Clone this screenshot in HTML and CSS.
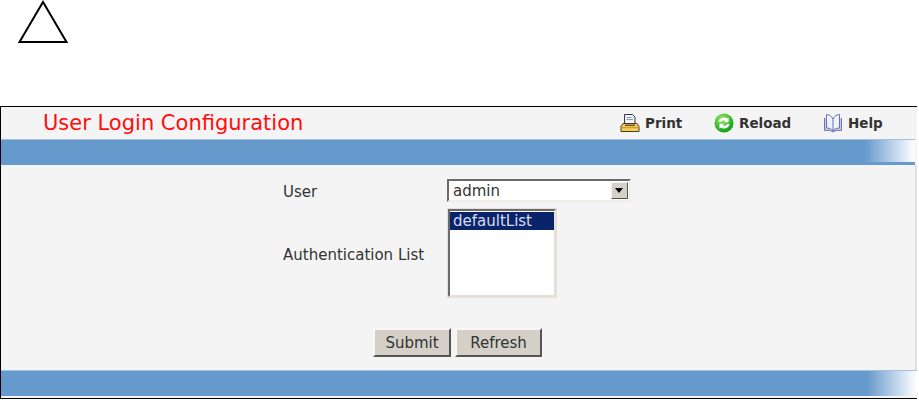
FILE: index.html
```html
<!DOCTYPE html>
<html lang="en">
<head>
<meta charset="utf-8">
<title>User Login Configuration</title>
<link rel="stylesheet" href="styles.css">
</head>
<body>
<div class="note">
  <svg class="warn" width="52" height="44" viewBox="0 0 52 44"><path d="M26 2 L49.500 42 L2.500 42 Z" fill="#fff" stroke="#000" stroke-width="2"/></svg>
</div>
<main class="frame">
  <header class="titlebar">
    <h1 class="title">User Login Configuration</h1>
    <nav class="tools">
      <a class="tool tool-print">
        <svg width="20" height="20" viewBox="0 0 20 20"><path d="M4.500 1.500h8l2.500 2.500v7H4.500z" fill="#f2f2f2" stroke="#33334d"/><path d="M6.500 4.500h5M6.500 6.500h6.500" stroke="#7a9ac8"/><path d="M3 10.500h14l2 3v5H1v-5z" fill="#f6cf5e" stroke="#4a3c20"/><path d="M1.500 14.500h17" stroke="#d89a28" stroke-width="1.500"/><path d="M5 11.500h10v1.500H5z" fill="#6a5a38"/></svg>
        <span>Print</span>
      </a>
      <a class="tool tool-reload">
        <svg width="20" height="20" viewBox="0 0 20 20"><defs><radialGradient id="g" cx="0.400" cy="0.300" r="0.800"><stop offset="0" stop-color="#9ee86a"/><stop offset="0.600" stop-color="#35b82c"/><stop offset="1" stop-color="#0c8c18"/></radialGradient></defs><circle cx="10" cy="10" r="9.500" fill="url(#g)"/><path d="M4.500 9a5.500 5.500 0 0 1 8.500-3.500l1.500-1.200v5H9.800l1.500-1.400a3.200 3.200 0 0 0-4.600 1.100z" fill="#fff"/><path d="M15.500 11a5.500 5.500 0 0 1-8.500 3.500l-1.500 1.200v-5h4.700l-1.500 1.400a3.200 3.200 0 0 0 4.600-1.100z" fill="#fff"/></svg>
        <span>Reload</span>
      </a>
      <a class="tool tool-help">
        <svg width="20" height="20" viewBox="0 0 20 20"><path d="M1.500 5v12.500c3.500-.5 6.500 0 8.500 1.500 2-1.500 5-2 8.500-1.500V5" fill="#c8cbe8" stroke="#7074b4"/><path d="M10 6C8.500 3 6 1.500 3.500 1.500v13.500c3 0 5 1 6.500 3 1.500-2 3.500-3 6.500-3V1.500C14 1.500 11.500 3 10 6z" fill="#eef0fb" stroke="#6a70b0"/><path d="M10 6v12" stroke="#6a70b0"/></svg>
        <span>Help</span>
      </a>
    </nav>
  </header>
  <div class="band band-top"></div>
  <form class="content">
    <div class="fields">
      <div class="field field-user">
        <label class="label">User</label>
        <div class="select">
          <span class="select-value">admin</span>
          <span class="select-arrow"></span>
        </div>
      </div>
      <div class="field field-auth">
        <label class="label">Authentication List</label>
        <div class="listbox">
          <div class="option">defaultList</div>
        </div>
      </div>
    </div>
    <div class="actions">
      <button type="button" class="btn btn-submit">Submit</button>
      <button type="button" class="btn btn-refresh">Refresh</button>
    </div>
  </form>
  <div class="band band-bottom"></div>
</main>
</body>
</html>
```
FILE: styles.css
```css
* { box-sizing: border-box; }
html, body { margin: 0; padding: 0; background: #fff; }
body {
  width: 919px;
  height: 400px;
  overflow: hidden;
  font-family: "DejaVu Sans", Verdana, sans-serif;
  font-size: 15px;
  color: #333;
}
.note { height: 106px; padding-left: 17px; }
.warn { display: block; }
.frame {
  width: 917px;
  height: 293px;
  border-top: 1px solid #000;
  border-left: 1px solid #000;
  border-bottom: 1px solid #000;
  display: flex;
  flex-direction: column;
  background: #f4f4f4;
}
.titlebar {
  height: 32px;
  display: flex;
  align-items: center;
  justify-content: space-between;
  padding-left: 42px;
  flex: none;
}
.title { margin: 0; font-size: 21px; font-weight: normal; color: #ff0d0d; }
.tools { display: flex; width: 297px; }
.tool { display: flex; align-items: center; gap: 5px; font-weight: bold; font-size: 13.500px; color: #333; }
.tool-print { width: 94px; }
.tool-reload { width: 109px; }
.band {
  flex: none;
  background: linear-gradient(to right, #6699cc 0, #6699cc 94.500%, #fff 100%);
  border-top: 1px solid #a4c0de;
}
.band-top {
  width: 914px;
  height: 26px;
  border-bottom: 3px solid #6699cc;
}
.band-bottom { height: 26px; margin-bottom: 2px; width: 916px; }
.content {
  flex: 1;
  width: 916px;
  border-right: 2px solid #e0e0e0;
  display: flex;
  flex-direction: column;
  padding-left: 282px;
}
.fields { padding-top: 14px; }
.field { display: flex; align-items: center; }
.label { width: 164px; }
.field-user .label { padding-top: 2px; }
.field-auth .label { padding-top: 4px; }
.select-value { padding-top: 1px; }
.field-user { height: 23px; }
.field-auth { height: 90px; margin-top: 6px; }
.select {
  width: 184px;
  height: 23px;
  display: flex;
  align-items: center;
  justify-content: space-between;
  background: #fff;
  border: 2px solid;
  border-color: #6a6a6a #f0ede6 #f0ede6 #6a6a6a;
  padding-left: 4px;
}
.select-arrow {
  width: 17px;
  height: 17px;
  margin-right: 1px;
  background: #d4d0c8;
  border: 1px solid;
  border-color: #f4f4f4 #555 #555 #f4f4f4;
  position: relative;
}
.select-arrow::after {
  content: "";
  position: absolute;
  left: 3px;
  top: 5px;
  border: 4px solid transparent;
  border-top: 5px solid #000;
  border-bottom: 0;
}
.listbox {
  width: 108px;
  height: 88px;
  margin: 1px;
  background: #fff;
  border: 2px solid;
  border-color: #6a6a6a #e4e0d8 #e4e0d8 #6a6a6a;
  outline: 1px solid #e4e0d8;
  padding-bottom: 1px;
}
.option { height: 18px; line-height: 18px; background: #0a246a; color: #d8dcf0; padding-left: 3px; margin-top: 1px; }
.actions { display: flex; gap: 4px; padding-left: 90px; margin-top: 30px; }
.btn {
  height: 29px;
  padding: 0;
  font: 15px "DejaVu Sans", Verdana, sans-serif;
  color: #333;
  background: #d4d0c8;
  border: 2px solid;
  border-color: #f8f8f8 #555 #555 #f8f8f8;
}
.btn-submit { width: 78px; }
.btn-refresh { width: 87px; }
```
